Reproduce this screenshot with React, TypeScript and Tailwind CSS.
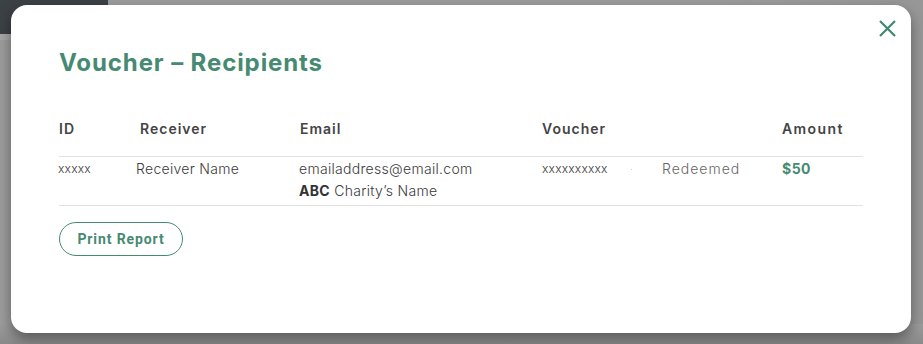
import React from "react";

const font = { fontFamily: "Inter, 'Open Sans', sans-serif" };

export default function App() {
  return (
    <div className="relative w-[923px] h-[344px] overflow-hidden bg-[#9d9d9d]" style={font}>
      {/* background page behind overlay */}
      <div className="absolute left-0 top-0 w-[108px] h-[34px] bg-[#3c4146]" />
      <div className="absolute left-0 top-[34px] w-[108px] h-[6px] bg-[#a6a6a6]" />
      <div className="absolute left-[722px] top-0 w-[201px] h-[344px] bg-gradient-to-r from-[#9d9d9d] to-[#979797]" />
      <div className="absolute left-0 bottom-0 w-[923px] h-[20px] bg-gradient-to-b from-[#9d9d9d] to-[#8a8a8a]" />

      <div className="relative pl-[11px] pt-[5px]">
        <div className="relative w-[900px] h-[328px] rounded-[16px] bg-white shadow-[0_6px_14px_rgba(0,0,0,0.4)] pl-[48px] pr-[48px] pt-[42px]">
          <button className="absolute right-[15px] top-[15px] w-[17px] h-[17px] flex items-center justify-center">
            <svg width="17" height="17" viewBox="0 0 17 17" fill="none" stroke="#3f8a6e" strokeWidth="2.2">
              <path d="M1 1 L16 16 M16 1 L1 16" />
            </svg>
          </button>

          <h1 className="text-[24px] leading-[32px] font-bold text-[#468a72] tracking-[0.9px]">
            Voucher – Recipients
          </h1>

          <div className="mt-[27px] w-[804px]">
            <div className="grid grid-cols-[81px_160px_242px_120px_120px_1fr] h-[51px] pt-[13px] items-start leading-[20px] text-[14px] font-semibold text-[#444] tracking-[1px] border-b border-[#e2e2e2]">
              <div>ID</div>
              <div>Receiver</div>
              <div>Email</div>
              <div>Voucher</div>
              <div></div>
              <div className="tracking-[1.4px]">Amount</div>
            </div>
            <div className="grid grid-cols-[81px_160px_242px_120px_120px_1fr] pt-[1px] pb-[3px] text-[14px] font-light text-[#3a3a3a] border-b border-[#e2e2e2] leading-[22px] tracking-[0.3px]">
              <div className="text-[12px] -ml-[1px] tracking-[0.2px]">xxxxx</div>
              <div className="-ml-[4px]">Receiver Name</div>
              <div className="-ml-[1px]">
                <div>emailaddress@email.com</div>
                <div>
                  <span className="font-bold text-[#333]">ABC</span> Charity’s Name
                </div>
              </div>
              <div className="relative text-[12px] tracking-[0.2px]">
                xxxxxxxxxx
                <span className="absolute left-[89px] top-[11px] w-[1px] h-[1px] bg-[#ccc]" />
              </div>
              <div className="text-[#666] tracking-[1px]">Redeemed</div>
              <div className="font-bold text-[#468a72] tracking-[0.5px]">$50</div>
            </div>
          </div>

          <button className="mt-[16px] h-[34px] w-[124px] rounded-full border border-[#468a72] text-[14px] font-bold text-[#468a72] tracking-[0.9px]" style={{ fontFamily: "Roboto, Arial, sans-serif" }}>
            Print Report
          </button>
        </div>
      </div>
    </div>
  );
}
